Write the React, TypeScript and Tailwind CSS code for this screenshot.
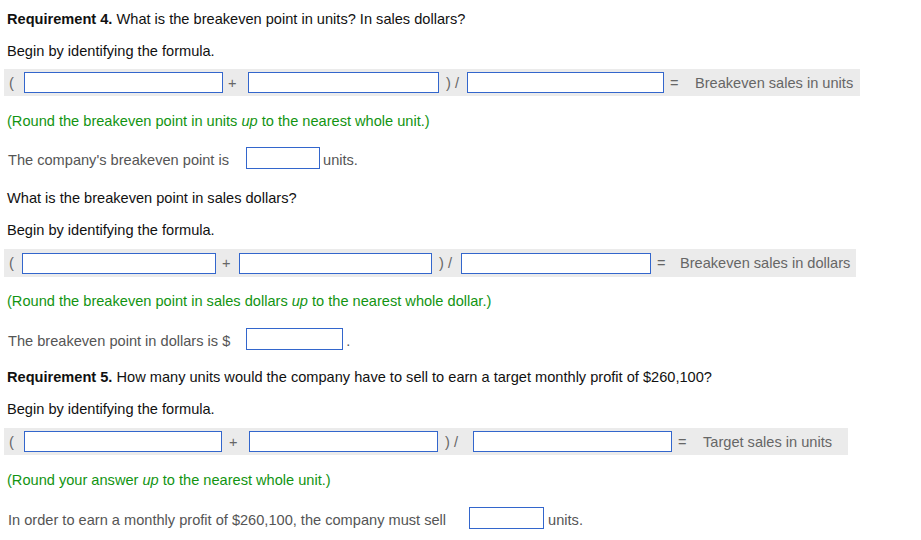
import React from "react";

type FormulaRowProps = {
    widths: [number, number, number];
    gaps: [number, number, number, number];
    plusPad: number;
    eqGap: number;
    result: string;
    barWidth: number;
    height: number;
};

const Box = ({ width, height }: { width: number; height: number }) => (
    <span
        className="inline-block shrink-0 border border-[#3366cc] bg-white"
        style={{ width, height }}
    />
);

// gray formula strip:  ( [ ] + [ ] ) / [ ] = result
const FormulaRow = ({ widths, gaps, plusPad, eqGap, result, barWidth, height }: FormulaRowProps) => {
    return (
        <div
            className="ml-[-3px] flex items-center bg-[#ebebeb] text-[#666]"
            style={{ width: barWidth, height }}
        >
            <span className="shrink-0 pl-[5px]" style={{ width: gaps[0] }}>(</span>
            <Box width={widths[0]} height={21} />
            <span className="shrink-0" style={{ width: gaps[1], paddingLeft: plusPad }}>+</span>
            <Box width={widths[1]} height={21} />
            <span className="shrink-0 pl-[7px]" style={{ width: gaps[2] }}>) /</span>
            <Box width={widths[2]} height={21} />
            <span className="shrink-0 pl-[6px]" style={{ width: gaps[3] }}>=</span>
            <span className="whitespace-nowrap" style={{ marginLeft: eqGap }}>{result}</span>
        </div>
    );
};

const Hint = ({ children, mt }: { children: React.ReactNode; mt: string }) => (
    <p className={`${mt} leading-[18px] text-[#129412]`}>{children}</p>
);

export default function App() {
    return (
        <div
            className="min-h-[540px] w-[921px] bg-white px-[7px] pt-[10px] text-[14.6px] leading-[18px] text-[#111]"
            style={{ fontFamily: '"Liberation Sans", Arial, sans-serif' }}
        >
            <p>
                <b>Requirement 4.</b> What is the breakeven point in units? In sales dollars?
            </p>
            <p className="mt-[14px]">Begin by identifying the formula.</p>

            <div className="mt-[9px]">
                <FormulaRow
                    widths={[199, 191, 197]}
                    gaps={[20, 25, 28, 12]}
                    plusPad={5}
                    eqGap={19}
                    result="Breakeven sales in units"
                    barWidth={856}
                    height={27}
                />
            </div>

            <Hint mt="mt-[16px]">
                (Round the breakeven point in units <i>up</i> to the nearest whole unit.)
            </Hint>

            <div className="mt-[19px] flex h-[22px] items-center pl-[1px] text-[#555]">
                <span>The company's breakeven point is</span>
                <span className="ml-[17px]"><Box width={74} height={22} /></span>
                <span className="ml-[3px]">units.</span>
            </div>

            <p className="mt-[18px]">What is the breakeven point in sales dollars?</p>
            <p className="mt-[14px]">Begin by identifying the formula.</p>

            <div className="mt-[10px]">
                <FormulaRow
                    widths={[194, 193, 190]}
                    gaps={[18, 23, 29, 13]}
                    plusPad={6}
                    eqGap={16}
                    result="Breakeven sales in dollars"
                    barWidth={852}
                    height={28}
                />
            </div>

            <Hint mt="mt-[15px]">
                (Round the breakeven point in sales dollars <i>up</i> to the nearest whole dollar.)
            </Hint>

            <div className="mt-[20px] flex h-[22px] items-center pl-[1px] text-[#555]">
                <span>The breakeven point in dollars is $</span>
                <span className="ml-[16px]"><Box width={97} height={22} /></span>
                <span className="ml-[3px]">.</span>
            </div>

            <p className="mt-[16px]">
                <b>Requirement 5.</b> How many units would the company have to sell to earn a target monthly profit of $260,100?
            </p>
            <p className="mt-[14px]">Begin by identifying the formula.</p>

            <div className="mt-[10px]">
                <FormulaRow
                    widths={[198, 189, 199]}
                    gaps={[20, 27, 35, 14]}
                    plusPad={7}
                    eqGap={17}
                    result="Target sales in units"
                    barWidth={844}
                    height={27}
                />
            </div>

            <Hint mt="mt-[16px]">
                (Round your answer <i>up</i> to the nearest whole unit.)
            </Hint>

            <div className="mt-[20px] flex h-[22px] items-center pl-[1px] text-[#555]">
                <span>In order to earn a monthly profit of $260,100, the company must sell</span>
                <span className="ml-[23px]"><Box width={75} height={22} /></span>
                <span className="ml-[4px]">units.</span>
            </div>
        </div>
    );
}
